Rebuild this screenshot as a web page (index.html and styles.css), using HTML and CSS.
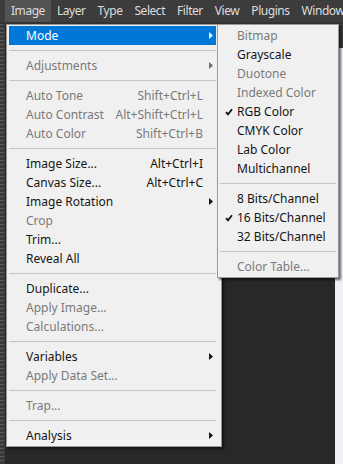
FILE: index.html
```html
<!DOCTYPE html>
<html>
<head>
<meta charset="utf-8">
<link rel="stylesheet" href="styles.css">
</head>
<body>
<div class="menubar">
  <span class="mb-item active">Image</span>
  <span class="mb-item">Layer</span>
  <span class="mb-item">Type</span>
  <span class="mb-item">Select</span>
  <span class="mb-item">Filter</span>
  <span class="mb-item">View</span>
  <span class="mb-item">Plugins</span>
  <span class="mb-item">Window</span>
</div>
<div class="workspace">
  <div class="ruler"></div>
  <div class="canvas"></div>
  <div class="side"><div class="side-top"></div></div>

  <div class="menu main">
    <div class="row hl"><span class="label">Mode</span><span class="sc"></span><span class="arr"><svg width="4" height="7" viewBox="0 0 4 7"><polygon points="0,0 4,3.5 0,7" fill="#e6f0fa"/></svg></span></div>
    <div class="sep"></div>
    <div class="row dis"><span class="label">Adjustments</span><span class="sc"></span><span class="arr"><svg width="4" height="7" viewBox="0 0 4 7"><polygon points="0,0 4,3.5 0,7" fill="#6f6f6f"/></svg></span></div>
    <div class="sep"></div>
    <div class="row dis"><span class="label">Auto Tone</span><span class="sc">Shift+Ctrl+L</span><span class="arr"></span></div>
    <div class="row dis"><span class="label">Auto Contrast</span><span class="sc">Alt+Shift+Ctrl+L</span><span class="arr"></span></div>
    <div class="row dis"><span class="label">Auto Color</span><span class="sc">Shift+Ctrl+B</span><span class="arr"></span></div>
    <div class="sep"></div>
    <div class="row"><span class="label">Image Size...</span><span class="sc">Alt+Ctrl+I</span><span class="arr"></span></div>
    <div class="row"><span class="label">Canvas Size...</span><span class="sc">Alt+Ctrl+C</span><span class="arr"></span></div>
    <div class="row"><span class="label">Image Rotation</span><span class="sc"></span><span class="arr"><svg width="4" height="7" viewBox="0 0 4 7"><polygon points="0,0 4,3.5 0,7" fill="#111"/></svg></span></div>
    <div class="row dis"><span class="label">Crop</span><span class="sc"></span><span class="arr"></span></div>
    <div class="row"><span class="label">Trim...</span><span class="sc"></span><span class="arr"></span></div>
    <div class="row"><span class="label">Reveal All</span><span class="sc"></span><span class="arr"></span></div>
    <div class="sep"></div>
    <div class="row"><span class="label">Duplicate...</span><span class="sc"></span><span class="arr"></span></div>
    <div class="row dis"><span class="label">Apply Image...</span><span class="sc"></span><span class="arr"></span></div>
    <div class="row dis"><span class="label">Calculations...</span><span class="sc"></span><span class="arr"></span></div>
    <div class="sep"></div>
    <div class="row"><span class="label">Variables</span><span class="sc"></span><span class="arr"><svg width="4" height="7" viewBox="0 0 4 7"><polygon points="0,0 4,3.5 0,7" fill="#111"/></svg></span></div>
    <div class="row dis"><span class="label">Apply Data Set...</span><span class="sc"></span><span class="arr"></span></div>
    <div class="sep"></div>
    <div class="row dis"><span class="label">Trap...</span><span class="sc"></span><span class="arr"></span></div>
    <div class="sep"></div>
    <div class="row"><span class="label">Analysis</span><span class="sc"></span><span class="arr"><svg width="4" height="7" viewBox="0 0 4 7"><polygon points="0,0 4,3.5 0,7" fill="#111"/></svg></span></div>
  </div>

  <div class="menu sub">
    <div class="row dis"><span class="chk"></span><span class="label">Bitmap</span></div>
    <div class="row"><span class="chk"></span><span class="label">Grayscale</span></div>
    <div class="row dis"><span class="chk"></span><span class="label">Duotone</span></div>
    <div class="row dis"><span class="chk"></span><span class="label">Indexed Color</span></div>
    <div class="row"><span class="chk"><svg width="8" height="8" viewBox="0 0 8 8"><path d="M1 4.2 L3 6.4 L7 1.2" fill="none" stroke="#111" stroke-width="1.8"/></svg></span><span class="label">RGB Color</span></div>
    <div class="row"><span class="chk"></span><span class="label">CMYK Color</span></div>
    <div class="row"><span class="chk"></span><span class="label">Lab Color</span></div>
    <div class="row"><span class="chk"></span><span class="label">Multichannel</span></div>
    <div class="sep"></div>
    <div class="row"><span class="chk"></span><span class="label">8 Bits/Channel</span></div>
    <div class="row"><span class="chk"><svg width="8" height="8" viewBox="0 0 8 8"><path d="M1 4.2 L3 6.4 L7 1.2" fill="none" stroke="#111" stroke-width="1.8"/></svg></span><span class="label">16 Bits/Channel</span></div>
    <div class="row"><span class="chk"></span><span class="label">32 Bits/Channel</span></div>
    <div class="sep"></div>
    <div class="row dis"><span class="chk"></span><span class="label">Color Table...</span></div>
  </div>
</div>
</body>
</html>
```

FILE: styles.css
```css
html, body {
  margin: 0;
  padding: 0;
  width: 343px;
  height: 464px;
  overflow: hidden;
  background: #282828;
  font-family: "Noto Sans", "Open Sans", sans-serif;
}

.menubar {
  height: 22px;
  background: #3c3c3c;
  display: flex;
  align-items: stretch;
  padding-left: 5px;
  border-bottom: 2px solid #323232;
  overflow: hidden;
}

.mb-item {
  flex: none;
  padding: 0 6px;
  color: #dedede;
  font-size: 12px;
  letter-spacing: -0.45px;
  line-height: 22px;
  white-space: nowrap;
}

.mb-item.active {
  background: #535353;
}

.workspace {
  position: relative;
  display: flex;
  height: 440px;
}

.ruler {
  width: 5px;
  background-color: #393939;
  background-image: repeating-linear-gradient(to bottom, #5a5a5a 0, #5a5a5a 1px, transparent 1px, transparent 4px);
  background-size: 4px 100%;
  background-repeat: no-repeat;
}

.canvas {
  flex: 1;
  background: #282828;
}

.side {
  width: 8px;
  background: #efeff5;
  display: flex;
  flex-direction: column;
}

.side-top {
  height: 24px;
  background: #3a3a3a;
}

.menu {
  position: absolute;
  top: 0;
  background: #f0f0f0;
  border: 1px solid #9a9a9a;
  box-shadow: 2px 2px 2px rgba(0, 0, 0, 0.55);
  font-size: 12px;
  box-sizing: border-box;
}

.main {
  left: 6px;
  width: 216px;
  padding: 1px 5px 1px 1px;
}

.sub {
  left: 217px;
  width: 122px;
  padding: 1px 2px 1px 1px;
}

.row {
  display: flex;
  align-items: center;
  height: 19px;
  line-height: 19px;
  color: #151515;
  white-space: nowrap;
}

.main .row {
  padding: 0 3px 0 17px;
  margin-left: 1px;
}

.sub .row {
  padding-left: 5px;
  margin-left: 1px;
}

.row.dis {
  color: #7a7a7a;
}

.row.hl {
  background: #0078d7;
  color: #ffffff;
}

.label {
  flex: 1;
}

.sc {
  text-align: right;
}

.arr {
  width: 10px;
  display: flex;
  justify-content: flex-end;
  align-items: center;
}

.arr svg {
  display: block;
}

.chk {
  width: 12px;
  display: flex;
  align-items: center;
}

.chk svg {
  display: block;
}

.sep {
  height: 11px;
  display: flex;
  align-items: center;
  margin-left: 1px;
}

.sep::before {
  content: "";
  flex: 1;
  height: 1px;
  background: #c4c4c4;
}
```
